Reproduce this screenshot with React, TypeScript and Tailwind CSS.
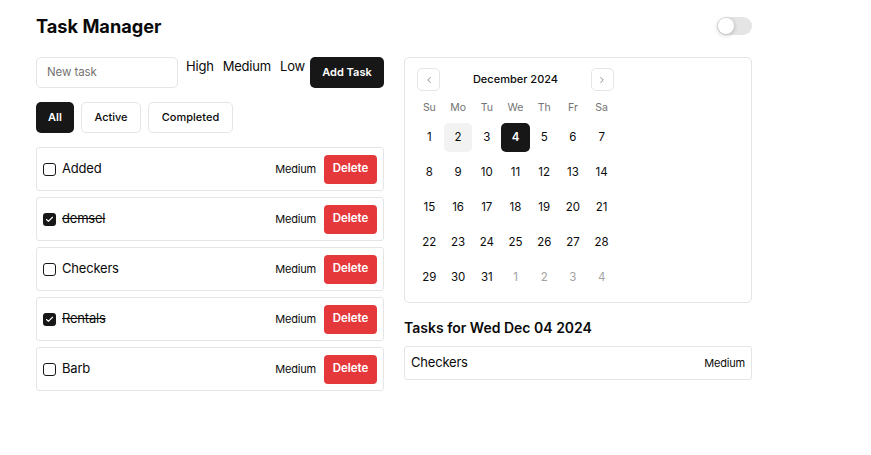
import React from "react";

const tasks = [
  { name: "Added", done: false },
  { name: "demsel", done: true },
  { name: "Checkers", done: false },
  { name: "Rentals", done: true },
  { name: "Barb", done: false },
];

const weeks: { d: number; muted?: boolean }[][] = [
  [1, 2, 3, 4, 5, 6, 7].map((d) => ({ d })),
  [8, 9, 10, 11, 12, 13, 14].map((d) => ({ d })),
  [15, 16, 17, 18, 19, 20, 21].map((d) => ({ d })),
  [22, 23, 24, 25, 26, 27, 28].map((d) => ({ d })),
  [
    { d: 29 },
    { d: 30 },
    { d: 31 },
    { d: 1, muted: true },
    { d: 2, muted: true },
    { d: 3, muted: true },
    { d: 4, muted: true },
  ],
];

function Checkbox({ checked }: { checked: boolean }) {
  return checked ? (
    <div className="w-[13px] h-[13px] rounded-[3px] bg-[#171717] flex items-center justify-center">
      <svg width="9" height="9" viewBox="0 0 24 24" fill="none" stroke="white" strokeWidth="3" strokeLinecap="round" strokeLinejoin="round">
        <path d="M20 6 9 17l-5-5" />
      </svg>
    </div>
  ) : (
    <div className="w-[13px] h-[13px] rounded-[3px] border border-[#171717] bg-white" />
  );
}

export default function App() {
  return (
    <div className="min-h-[455px] bg-white text-[#0a0a0a] px-[36px] pt-[14px]" style={{ fontFamily: "Inter, 'Noto Sans', sans-serif" }}>
      <div className="w-[716px] flex items-center justify-between h-[24px]">
        <h1 className="text-[18.2px] font-bold leading-none">Task Manager</h1>
        <div className="w-[35px] h-[18px] rounded-full bg-[#e5e5e5] flex items-center px-[1px]">
          <div className="w-[16px] h-[16px] rounded-full bg-white shadow-[0_1px_4px_rgba(0,0,0,0.25)]" />
        </div>
      </div>

      <div className="flex gap-[20px] mt-[19px]">
        {/* Left column */}
        <div className="w-[348px] flex flex-col">
          <div className="flex items-start">
            <div className="w-[142px] h-[31px] border border-[#e5e5e5] rounded-[5px] flex items-center px-[10px] text-[11.5px] text-[#737373] tracking-[-0.1px]">
              New task
            </div>
            <div className="flex gap-[9px] text-[13px] ml-[8px] mt-[2px] leading-[15px] tracking-[-0.2px]">
              <span>High</span>
              <span>Medium</span>
              <span>Low</span>
            </div>
            <div className="ml-auto w-[74px] h-[31px] rounded-[5px] bg-[#171717] text-white text-[11px] font-semibold flex items-center justify-center">
              Add Task
            </div>
          </div>

          <div className="flex gap-[7px] mt-[14px]">
            <div className="w-[38px] h-[31px] rounded-[5px] bg-[#171717] text-white text-[11px] font-semibold flex items-center justify-center">All</div>
            <div className="w-[60px] h-[31px] rounded-[5px] border border-[#e5e5e5] text-[11px] font-medium flex items-center justify-center">Active</div>
            <div className="w-[85px] h-[31px] rounded-[5px] border border-[#e5e5e5] text-[11px] font-medium flex items-center justify-center">Completed</div>
          </div>

          <div className="flex flex-col gap-[6px] mt-[14px]">
            {tasks.map((t) => (
              <div key={t.name} className="h-[44px] border border-[#e5e5e5] rounded-[3px] flex items-center pl-[6px] pr-[6px]">
                <Checkbox checked={t.done} />
                <span className={"ml-[6px] text-[13px] tracking-[-0.2px] " + (t.done ? "line-through" : "")}>{t.name}</span>
                <span className="ml-auto text-[11px] tracking-[-0.2px]">Medium</span>
                <div className="ml-[8px] w-[53px] h-[29px] rounded-[4px] bg-[#e5383b] text-white text-[11.5px] font-semibold flex items-center justify-center">
                  Delete
                </div>
              </div>
            ))}
          </div>
        </div>

        {/* Right column */}
        <div className="w-[348px] flex flex-col">
          <div className="h-[246px] border border-[#e5e5e5] rounded-[5px] pl-[10px] pt-[10px]">
            <div className="w-[201px]">
              <div className="flex items-center justify-between pl-[2px] pr-[2px]">
                <div className="w-[23px] h-[23px] border border-[#e5e5e5] rounded-[5px] flex items-center justify-center">
                  <svg width="10" height="10" viewBox="0 0 24 24" fill="none" stroke="#737373" strokeWidth="2" strokeLinecap="round" strokeLinejoin="round">
                    <path d="m15 18-6-6 6-6" />
                  </svg>
                </div>
                <span className="text-[11px] font-medium">December 2024</span>
                <div className="w-[23px] h-[23px] border border-[#e5e5e5] rounded-[5px] flex items-center justify-center">
                  <svg width="10" height="10" viewBox="0 0 24 24" fill="none" stroke="#737373" strokeWidth="2" strokeLinecap="round" strokeLinejoin="round">
                    <path d="m9 18 6-6-6-6" />
                  </svg>
                </div>
              </div>
              <div className="grid grid-cols-7 mt-[9px] text-[10.5px] text-[#737373] h-[16px] items-center">
                {["Su", "Mo", "Tu", "We", "Th", "Fr", "Sa"].map((d) => (
                  <div key={d} className="text-center">{d}</div>
                ))}
              </div>
              <div className="flex flex-col gap-[6.5px] mt-[7px]">
                {weeks.map((w, i) => (
                  <div key={i} className="grid grid-cols-7">
                    {w.map((c, j) => {
                      const sel = i === 0 && c.d === 4;
                      const today = i === 0 && c.d === 2;
                      return (
                        <div
                          key={j}
                          className={
                            "h-[28.7px] rounded-[5px] flex items-center justify-center text-[11.5px] " +
                            (sel
                              ? "bg-[#171717] text-white font-semibold"
                              : today
                              ? "bg-[#f2f2f2]"
                              : c.muted
                              ? "text-[#a3a3a3]"
                              : "")
                          }
                        >
                          {c.d}
                        </div>
                      );
                    })}
                  </div>
                ))}
              </div>
            </div>
          </div>

          <h2 className="mt-[16px] text-[14px] font-semibold leading-[18px]">Tasks for Wed Dec 04 2024</h2>
          <div className="mt-[9px] h-[34px] border border-[#e5e5e5] rounded-[3px] flex items-center justify-between px-[6px]">
            <span className="text-[13px] tracking-[-0.2px]">Checkers</span>
            <span className="text-[11px] tracking-[-0.2px]">Medium</span>
          </div>
        </div>
      </div>
    </div>
  );
}
